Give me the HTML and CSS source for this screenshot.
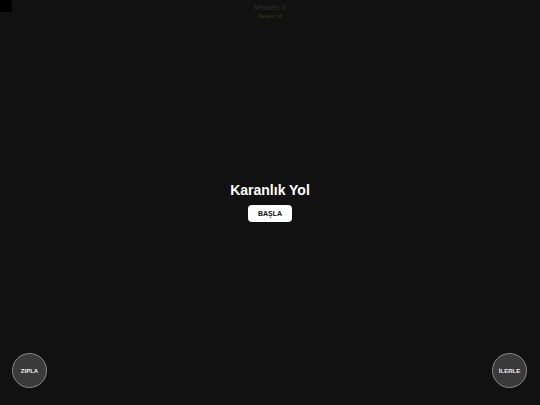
FILE: index.html
```html
<!DOCTYPE html>
<html lang="tr">
<head>
<meta charset="utf-8">
<link rel="stylesheet" href="styles.css">
</head>
<body>
<div class="game">
  <div class="corner"></div>
  <div class="hud">
    <div class="dist">Mesafe: 0</div>
    <div class="best">Rekor: 0</div>
  </div>
  <div class="menu">
    <h1 class="title">Karanlık Yol</h1>
    <button class="start">BAŞLA</button>
  </div>
  <div class="controls">
    <button class="ctl">ZIPLA</button>
    <button class="ctl">İLERLE</button>
  </div>
</div>
</body>
</html>
```
FILE: styles.css
```css
html, body {
  margin: 0;
  padding: 0;
  background: #111111;
  width: 540px;
  height: 405px;
  overflow: hidden;
  font-family: "Liberation Sans", Arial, sans-serif;
}
.game {
  position: relative;
  width: 540px;
  height: 405px;
  display: flex;
  flex-direction: column;
  align-items: center;
}
.corner {
  position: absolute;
  left: 0;
  top: 0;
  width: 12px;
  height: 12px;
  background: #000;
}
.hud {
  display: flex;
  flex-direction: column;
  align-items: center;
  padding-top: 3px;
  height: 20px;
}
.dist {
  color: #262626;
  font-size: 7px;
  font-weight: bold;
  line-height: 9px;
}
.best {
  color: #28340f;
  font-size: 6px;
  font-weight: bold;
  line-height: 8px;
}
.menu {
  display: flex;
  flex-direction: column;
  align-items: center;
  margin-top: 158px;
}
.title {
  margin: 0;
  color: #fff;
  font-size: 14px;
  font-weight: bold;
  line-height: 18px;
}
.start {
  margin-top: 6px;
  width: 44px;
  height: 17px;
  border: none;
  border-radius: 4px;
  background: #fff;
  color: #111;
  font-family: inherit;
  font-size: 7px;
  font-weight: bold;
  padding: 0;
}
.controls {
  margin-top: auto;
  align-self: stretch;
  display: flex;
  justify-content: space-between;
  padding: 0 13px 17px 12px;
}
.ctl {
  width: 35px;
  height: 35px;
  border-radius: 50%;
  border: 1px solid #8a8a8a;
  background: #3a3a3a;
  color: #eeeeee;
  font-family: inherit;
  font-size: 6px;
  font-weight: bold;
  padding: 0;
}
```
